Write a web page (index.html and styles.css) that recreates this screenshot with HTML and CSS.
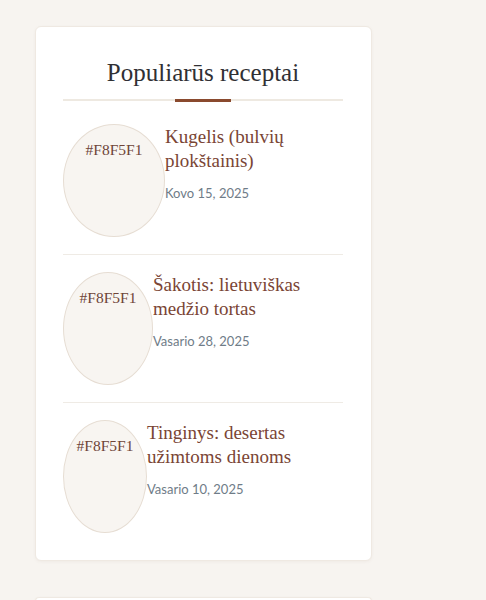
FILE: index.html
```html
<!DOCTYPE html>
<html lang="lt">
<head>
<meta charset="utf-8">
<link rel="stylesheet" href="styles.css">
</head>
<body>
<div class="page">
  <section class="card">
    <header class="card-head">
      <h2 class="card-title">Populiarūs receptai</h2>
      <div class="rule"><span class="accent"></span></div>
    </header>
    <ul class="list">
      <li class="item">
        <div class="thumb thumb-a"><span class="alt">#F8F5F1</span></div>
        <div class="info">
          <h3 class="name">Kugelis (bulvių plokštainis)</h3>
          <p class="date">Kovo 15, 2025</p>
        </div>
      </li>
      <li class="item">
        <div class="thumb thumb-b"><span class="alt">#F8F5F1</span></div>
        <div class="info">
          <h3 class="name">Šakotis: lietuviškas medžio tortas</h3>
          <p class="date">Vasario 28, 2025</p>
        </div>
      </li>
      <li class="item">
        <div class="thumb thumb-c"><span class="alt">#F8F5F1</span></div>
        <div class="info">
          <h3 class="name">Tinginys: desertas užimtoms dienoms</h3>
          <p class="date">Vasario 10, 2025</p>
        </div>
      </li>
    </ul>
  </section>
  <section class="card card-next"></section>
</div>
</body>
</html>
```
FILE: styles.css
```css
* { box-sizing: border-box; }
html, body { margin: 0; padding: 0; }
body {
  background: #f7f4f0;
  font-family: "Liberation Serif", serif;
  width: 486px;
  height: 600px;
  overflow: hidden;
}
.page {
  padding: 26px 0 0 35px;
  display: flex;
  flex-direction: column;
  gap: 36px;
}
.card {
  width: 337px;
  background: #fff;
  border: 1px solid #efe9e2;
  border-radius: 6px;
  box-shadow: 0 1px 3px rgba(120, 90, 60, 0.06);
  padding: 0 28px 0 27px;
}
.card-next { height: 4px; border-bottom: none; border-radius: 6px 6px 0 0; }
.card-head {
  padding-top: 31px;
  margin-bottom: 23px;
}
.card-title {
  margin: 0;
  text-align: center;
  font-family: "Liberation Serif", serif;
  font-weight: 400;
  font-size: 25px;
  line-height: 30px;
  color: #303034;
}
.rule {
  margin-top: 11px;
  height: 2px;
  background: #eee9e1;
  display: flex;
  justify-content: center;
  align-items: flex-start;
}
.accent {
  width: 56px;
  height: 3px;
  background: #8a4a2e;
}
.list { list-style: none; margin: 0; padding: 0; }
.item {
  display: flex;
  align-items: flex-start;
  padding: 0 0 17px;
  border-bottom: 1px solid #efebe5;
}
.item + .item { padding-top: 17px; }
.item:last-child { border-bottom: none; padding-bottom: 27px; }
.thumb {
  flex: none;
  height: 113px;
  border-radius: 50%;
  background: #f8f5f1;
  border: 1px solid #e6ddd3;
  display: flex;
  justify-content: center;
  padding-top: 15px;
}
.thumb-a { width: 102px; }
.thumb-b { width: 90px; }
.thumb-c { width: 84px; }
.alt {
  font-family: "Liberation Serif", serif;
  font-size: 15.5px;
  line-height: 20px;
  color: #6e4438;
}
.info { flex: 1; padding-top: 1px; }
.name {
  margin: 0;
  font-family: "Liberation Serif", serif;
  font-weight: 400;
  font-size: 19px;
  line-height: 24px;
  color: #7a4535;
}
.date {
  margin: 11px 0 0;
  font-family: "Lato", sans-serif;
  font-size: 13px;
  line-height: 18px;
  color: #6f7c88;
}
```
